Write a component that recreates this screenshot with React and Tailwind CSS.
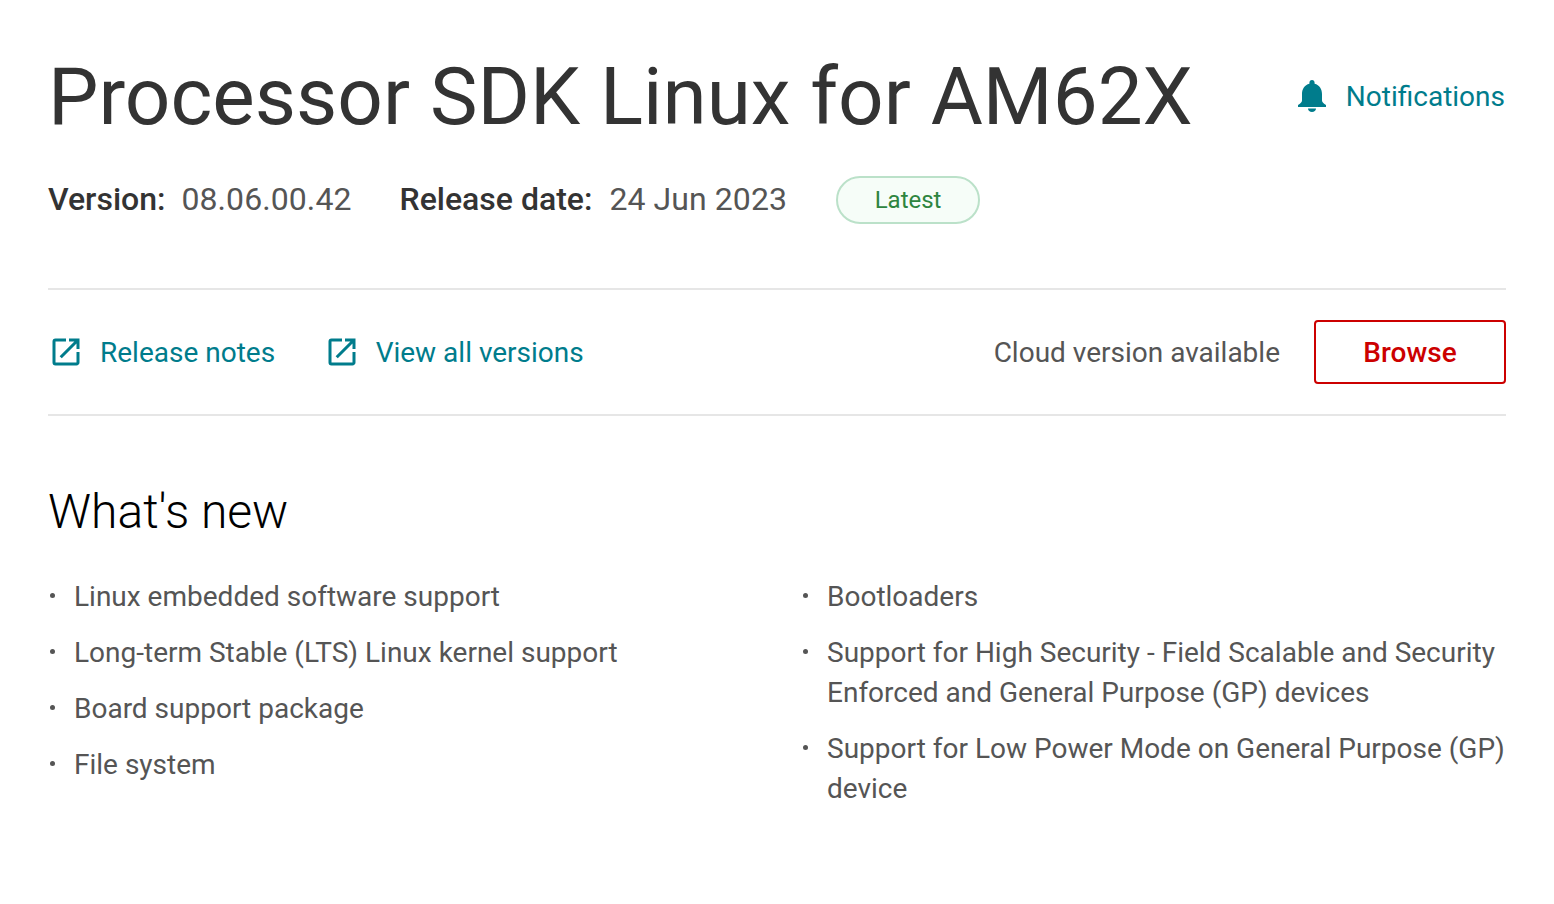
function Ext() {
  return (
    <svg width="36" height="36" viewBox="0 0 24 24" className="shrink-0" fill="#007c8c">
      <path d="M19 19H5V5h7V3H5a2 2 0 0 0-2 2v14a2 2 0 0 0 2 2h14c1.1 0 2-.9 2-2v-7h-2v7zM14 3v2h3.59l-9.83 9.83 1.41 1.41L19 6.41V10h2V3h-7z" />
    </svg>
  );
}

function Bell() {
  return (
    <svg width="28" height="32" viewBox="0 0 28 32" fill="#007c8c" className="shrink-0">
      <path d="M14 0c1.6 0 2.6 1.2 2.6 2.8v.9C21.5 5 24 9 24 14v6.5c0 1.3 1 2.5 4 4.5v2H0v-2c3-2 4-3.2 4-4.5V14C4 9 6.5 5 11.4 3.7v-.9C11.4 1.2 12.4 0 14 0zM10 28.5h8c0 2-1.8 3.5-4 3.5s-4-1.5-4-3.5z" />
    </svg>
  );
}

function Item({ children }) {
  return (
    <li className="flex text-[#555555] text-[28px] leading-[40px] mb-4">
      <span className="w-[26px] shrink-0 relative">
        <span className="absolute left-[2px] top-[16px] w-[5px] h-[5px] rounded-full bg-[#555555]" />
      </span>
      <span>{children}</span>
    </li>
  );
}

export default function App() {
  return (
    <div className="min-h-[904px] bg-white px-[48px] pt-[48px] font-['Roboto',sans-serif]">
      <div className="flex items-center justify-between h-[96px]">
        <h1 className="text-[80px] leading-[96px] pt-[2px] font-normal text-[#333333]">Processor SDK Linux for AM62X</h1>
        <a className="flex items-center gap-[20px] text-[28px] leading-[40px] text-[#007c8c] pr-[1px]">
          <Bell />
          <span className="pt-[2px]">Notifications</span>
        </a>
      </div>

      <div className="flex items-center mt-[32px] h-[48px] text-[32px] leading-[40px]">
        <span className="font-medium text-[#333333] pb-[2px]">Version:</span>
        <span className="ml-[16px] text-[#555555] pb-[2px] tracking-[0.08px]">08.06.00.42</span>
        <span className="ml-[48px] font-medium text-[#333333] pb-[2px]">Release date:</span>
        <span className="ml-[17px] text-[#555555] pb-[2px] tracking-[0.08px]">24 Jun 2023</span>
        <span className="ml-[49px] w-[144px] h-[48px] rounded-full border-2 border-[#bbe1c9] bg-[#f6fdf8] text-[#2e8540] text-[24px] flex items-center justify-center">Latest</span>
      </div>

      <div className="mt-[64px] h-[128px] border-y-2 border-[#e6e6e6] flex items-center justify-between">
        <div className="flex items-center gap-[48.5px]">
          <a className="flex items-center gap-[16px] text-[28px] leading-[40px] text-[#007c8c]"><Ext /><span className="pt-[2px]">Release notes</span></a>
          <a className="flex items-center gap-[16px] text-[28px] leading-[40px] text-[#007c8c]"><Ext /><span className="pt-[2px]">View all versions</span></a>
        </div>
        <div className="flex items-center gap-[34px]">
          <span className="text-[28px] leading-[40px] pt-[2px] text-[#555555]">Cloud version available</span>
          <button className="w-[192px] h-[64px] rounded border-2 border-[#cc0000] text-[#cc0000] text-[28px] pt-[2px] font-medium">Browse</button>
        </div>
      </div>

      <h2 className="mt-[64px] text-[48px] leading-[64px] font-light text-[#000000]">What's new</h2>

      <div className="mt-[33px] grid grid-cols-2 gap-x-[48px]">
        <ul>
          <Item>Linux embedded software support</Item>
          <Item>Long-term Stable (LTS) Linux kernel support</Item>
          <Item>Board support package</Item>
          <Item>File system</Item>
        </ul>
        <ul>
          <Item>Bootloaders</Item>
          <Item>Support for High Security - Field Scalable and Security Enforced and General Purpose (GP) devices</Item>
          <Item>Support for Low Power Mode on General Purpose (GP) device</Item>
        </ul>
      </div>
    </div>
  );
}
